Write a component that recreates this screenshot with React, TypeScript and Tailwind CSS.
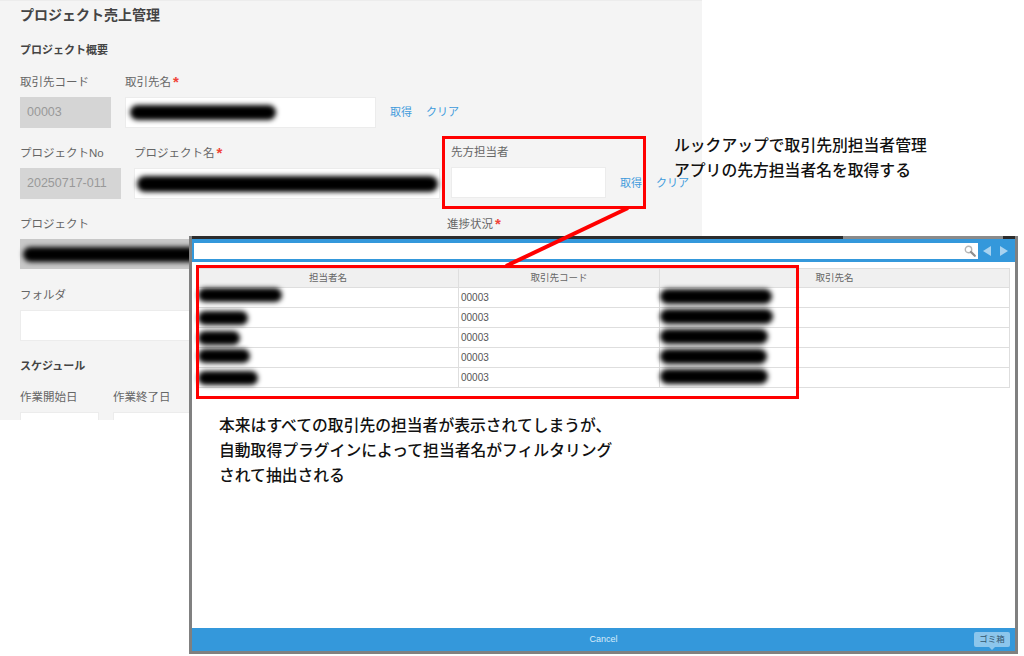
const FONT = "font-['Liberation_Sans','Noto_Sans_CJK_JP',sans-serif]";

const contacts = [
  { name: "w-[84px]", nameTop: "top-[-2px]", company: "w-[112px]" },
  { name: "w-[50px]", nameTop: "top-[1px]", company: "w-[113px]" },
  { name: "w-[42px]", nameTop: "top-[1px]", company: "w-[108px]" },
  { name: "w-[52px]", nameTop: "top-[-1px]", company: "w-[107px]" },
  { name: "w-[60px]", nameTop: "top-[1px]", company: "w-[108px]" },
];

function Redacted({ className }: { className: string }) {
  return <div className={`rounded-full bg-black blur-[2.5px] ${className}`} />;
}

function Label({ text, required, className = "" }: { text: string; required?: boolean; className?: string }) {
  return (
    <div className={`flex h-[16px] items-center text-[11.5px] leading-none text-[#666] ${className}`}>
      {text}
      {required && <span className="ml-[2px] -translate-y-[2px] text-[15px] font-bold text-[#f04438]">*</span>}
    </div>
  );
}

function Field({ className = "", children }: { className?: string; children?: React.ReactNode }) {
  return (
    <div className={`mt-[6px] flex h-[31px] items-center border border-[#ececec] bg-white ${className}`}>
      {children}
    </div>
  );
}

function ReadOnly({ value, className = "" }: { value: string; className?: string }) {
  return (
    <div className={`mt-[6px] flex h-[31px] items-center bg-[#d5d5d5] pl-[7px] text-[12.5px] text-[#999] ${className}`}>
      {value}
    </div>
  );
}

function Lookup({ className = "" }: { className?: string }) {
  return (
    <div className={`mt-[22px] flex h-[31px] items-center gap-[14px] text-[11px] text-[#3f9bdc] ${className}`}>
      <span>取得</span>
      <span>クリア</span>
    </div>
  );
}

function ProjectForm() {
  return (
    <div className="h-[420px] w-[702px] overflow-hidden border-t border-[#ececec] bg-[#f4f4f4] pl-[20px]">
      <h1 className="mt-[4px] text-[14px] leading-[20px] font-bold text-[#444]">プロジェクト売上管理</h1>
      <h2 className="mt-[17px] text-[11px] leading-[16px] font-bold text-[#444]">プロジェクト概要</h2>

      <div className="mt-[17px] flex">
        <div className="w-[105px]">
          <Label text="取引先コード" />
          <ReadOnly value="00003" className="w-[91px]" />
        </div>
        <div className="w-[265px]">
          <Label text="取引先名" required />
          <Field className="w-[251px] pl-[4px]">
            <Redacted className="h-[15px] w-[146px]" />
          </Field>
        </div>
        <Lookup />
      </div>

      <div className="mt-[18px] flex">
        <div className="w-[114px]">
          <Label text="プロジェクトNo" />
          <ReadOnly value="20250717-011" className="w-[101px]" />
        </div>
        <div className="w-[317px]">
          <Label text="プロジェクト名" required />
          <Field className="w-[306px] pl-[2px]">
            <Redacted className="h-[16px] w-[301px]" />
          </Field>
        </div>
        <div className="w-[169px]">
          <Label text="先方担当者" className="-mt-[1px] mb-[1px]" />
          <Field className="w-[155px]" />
        </div>
        <Lookup />
      </div>

      <div className="mt-[18px] flex">
        <div className="w-[427px]">
          <Label text="プロジェクト" />
          <div className="mt-[6px] flex h-[30px] w-[300px] items-center bg-[#c8c8c8] pl-[3px]">
            <Redacted className="h-[15px] w-[285px]" />
          </div>
        </div>
        <Label text="進捗状況" required />
      </div>

      <Label text="フォルダ" className="mt-[19px]" />
      <Field className="w-[300px]" />

      <h2 className="mt-[17px] text-[11px] leading-[16px] font-bold text-[#444]">スケジュール</h2>

      <div className="mt-[16px] flex gap-[14px]">
        <div>
          <Label text="作業開始日" />
          <Field className="w-[79px]" />
        </div>
        <div>
          <Label text="作業終了日" />
          <Field className="w-[79px]" />
        </div>
      </div>
    </div>
  );
}

function LookupDialog() {
  return (
    <div className="absolute top-[236px] left-[189px] flex h-[418px] w-[829px] flex-col border-x-[3px] border-b-[3px] border-[#808080] bg-white">
      <div className="flex h-[3px] shrink-0">
        <div className="w-[651px] bg-[#2c2c2c]" />
        <div className="w-[160px] bg-[#8a8a8a]" />
        <div className="flex-1 bg-[#2c2c2c]" />
      </div>
      <div className="flex h-[23px] shrink-0 items-center bg-[#3498db] pl-[2px]">
        <div className="flex h-[16px] w-[784px] items-center justify-end bg-white pr-[2px]">
          <svg width="12" height="12" viewBox="0 0 12 12" fill="none">
            <circle cx="4.5" cy="4.5" r="3.2" stroke="#b5b5b5" strokeWidth="1.4" />
            <line x1="7" y1="7" x2="10.8" y2="10.8" stroke="#8f8f8f" strokeWidth="2.2" strokeLinecap="round" />
          </svg>
        </div>
        <div className="ml-[5px] h-0 w-0 border-y-[5px] border-r-[8px] border-y-transparent border-r-[#a9d3f0]" />
        <div className="ml-[9px] h-0 w-0 border-y-[5px] border-l-[8px] border-y-transparent border-l-[#a9d3f0]" />
      </div>

      <div className="mt-[6px] ml-[5px] flex-1">
        <div className="w-[813px] border-x border-[#dedede] text-[10px] text-[#666]">
          <div className="grid h-[20px] grid-cols-[260px_202px_1fr] items-center border-y border-[#dedede] bg-[#f0f0f0] text-center text-[9.5px]">
            <div>担当者名</div>
            <div className="flex h-full items-center justify-center border-x border-[#dedede]">取引先コード</div>
            <div>取引先名</div>
          </div>
          {contacts.map((contact, i) => (
            <div key={i} className="grid h-[20px] grid-cols-[260px_202px_1fr] items-center border-b border-[#dedede]">
              <div className="h-full pt-[2px]">
                <Redacted className={`relative h-[14px] ${contact.nameTop} ${contact.name}`} />
              </div>
              <div className="flex h-full items-center border-x border-[#dedede] pl-[2px] text-[#555]">00003</div>
              <Redacted className={`relative -top-[1px] h-[15px] ${contact.company}`} />
            </div>
          ))}
        </div>
      </div>

      <div className="relative flex h-[23px] shrink-0 items-center justify-center bg-[#3498db] text-[9px] text-[#d8ecfa]">
        Cancel
        <div className="absolute top-[4px] right-[5px] flex h-[15px] w-[36px] items-center justify-center rounded-[2px] bg-[#8cc6ec] text-[8.5px] text-[#33566e]">
          ゴミ箱
          <div className="absolute top-[15px] left-[15px] h-0 w-0 border-x-[3px] border-t-[3px] border-x-transparent border-t-[#8cc6ec]" />
        </div>
      </div>
    </div>
  );
}

export default function App() {
  return (
    <div className={`relative h-[656px] w-[1024px] overflow-hidden bg-white ${FONT}`}>
      <ProjectForm />
      <LookupDialog />

      {/* annotations drawn over the screenshot */}
      <div className="absolute top-[136px] left-[442px] h-[73px] w-[204px] border-[3px] border-[#ff0000]" />
      <div className="absolute top-[265px] left-[196px] h-[134px] w-[603px] border-[3px] border-[#ff0000]" />
      <svg className="absolute top-0 left-0" width="1024" height="656" fill="none">
        <line x1="628" y1="208" x2="506" y2="266" stroke="#ff0000" strokeWidth="4" />
      </svg>

      <div className="absolute top-[134px] left-[674px] text-[15.8px] leading-[24.5px] font-medium text-[#111]">
        <p>ルックアップで取引先別担当者管理</p>
        <p>アプリの先方担当者名を取得する</p>
      </div>
      <div className="absolute top-[413px] left-[219px] text-[15.8px] leading-[25px] font-medium text-[#111]">
        <p>本来はすべての取引先の担当者が表示されてしまうが、</p>
        <p>自動取得プラグインによって担当者名がフィルタリング</p>
        <p>されて抽出される</p>
      </div>
    </div>
  );
}
